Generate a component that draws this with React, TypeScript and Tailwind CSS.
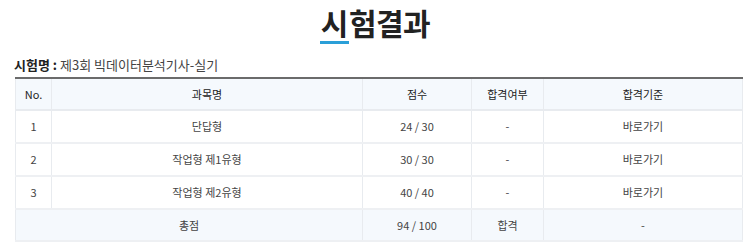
const ROWS = [
  { no: '1', subject: '단답형', score: '24 / 30', pass: '-', link: '바로가기' },
  { no: '2', subject: '작업형 제1유형', score: '30 / 30', pass: '-', link: '바로가기' },
  { no: '3', subject: '작업형 제2유형', score: '40 / 40', pass: '-', link: '바로가기' },
]

const FONT = "font-['Malgun_Gothic','Noto_Sans_CJK_KR',sans-serif]"

export default function App() {
  return (
    <div className={`${FONT} bg-white w-[750px] h-[247px] text-[#333]`}>
      {/* Title */}
      <div className="h-[50px] flex items-start justify-center pt-[2px]">
        <h1 className="text-[30px] leading-[40px] font-bold text-[#222] tracking-[-0.5px]">
          <span className="inline-block border-b-[3px] border-[#2a9fd8] leading-[38px] px-[1px]">시</span>
          험결과
        </h1>
      </div>

      {/* Exam name */}
      <div className="pl-[14px] h-[27px] pt-[1px] text-[13px] leading-[27px] text-[#444]">
        <span className="font-bold text-[#222]">시험명 : </span>
        제3회 빅데이터분석기사-실기
      </div>

      {/* Result table */}
      <div className="pl-[15px]">
        <table className="w-[727px] border-collapse table-fixed text-[11px] text-[#444] text-center">
          <colgroup>
            <col className="w-[36px]" />
            <col className="w-[311px]" />
            <col className="w-[109px]" />
            <col className="w-[72px]" />
            <col className="w-[199px]" />
          </colgroup>
          <thead>
            <tr className="h-[32px] bg-[#f5f9fd] border-t-2 border-t-[#6b6b6b] border-b-2 border-b-[#e8ebef] text-[#222]">
              <th className="font-normal border-x border-[#e8ebef]">No.</th>
              <th className="font-normal border-x border-[#e8ebef]">과목명</th>
              <th className="font-normal border-x border-[#e8ebef]">점수</th>
              <th className="font-normal border-x border-[#e8ebef]">합격여부</th>
              <th className="font-normal border-x border-[#e8ebef]">합격기준</th>
            </tr>
          </thead>
          <tbody>
            {ROWS.map(r => (
              <tr key={r.no} className="h-[33px] border-b-2 border-[#eef0f3]">
                <td className="border-x border-[#e8ebef]">{r.no}</td>
                <td className="border-x border-[#e8ebef]">{r.subject}</td>
                <td className="border-x border-[#e8ebef]">{r.score}</td>
                <td className="border-x border-[#e8ebef]">{r.pass}</td>
                <td className="border-x border-[#e8ebef]">{r.link}</td>
              </tr>
            ))}
            <tr className="h-[32px] bg-[#f5f9fd] border-b-2 border-[#eef0f3]">
              <td colSpan={2} className="border-x border-[#e8ebef]">총점</td>
              <td className="border-x border-[#e8ebef]">94 / 100</td>
              <td className="border-x border-[#e8ebef]">합격</td>
              <td className="border-x border-[#e8ebef]">-</td>
            </tr>
          </tbody>
        </table>
      </div>
    </div>
  )
}
